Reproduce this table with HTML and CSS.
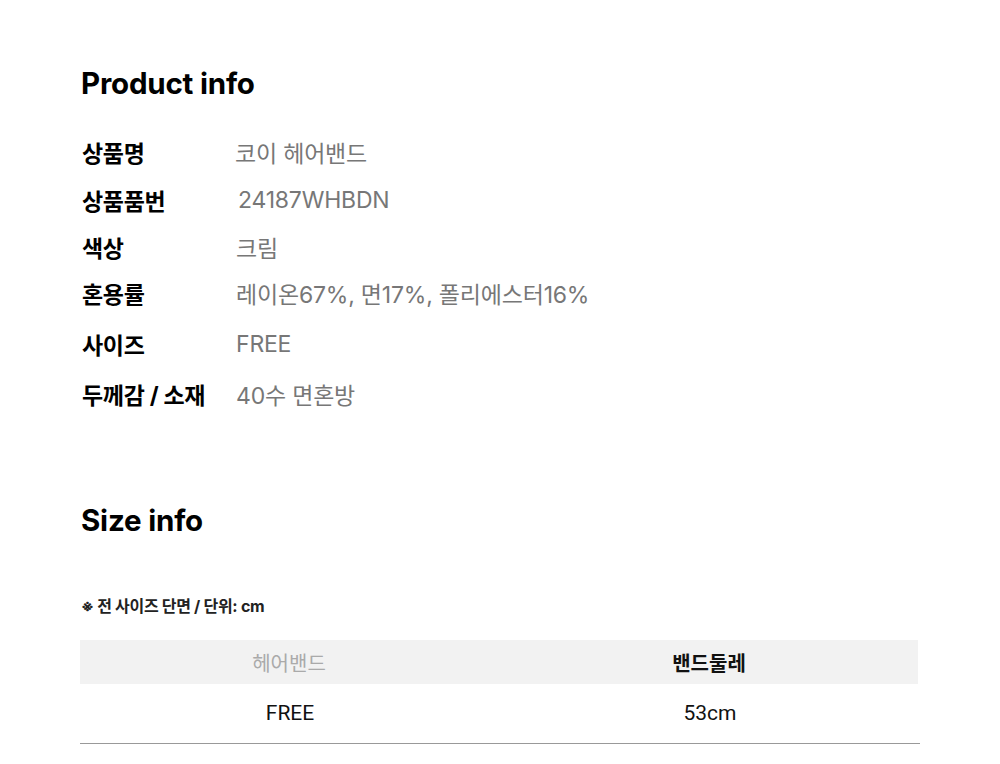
FILE: index.html
```html
<!DOCTYPE html>
<html lang="ko">
<head>
<meta charset="utf-8">
<link rel="stylesheet" href="styles.css">
</head>
<body>
<main class="page">
  <section class="product">
    <h2 class="title">Product info</h2>
    <dl class="info">
      <div class="row r1"><dt>상품명</dt><dd>코이 헤어밴드</dd></div>
      <div class="row r2"><dt>상품품번</dt><dd>24187WHBDN</dd></div>
      <div class="row r3"><dt>색상</dt><dd>크림</dd></div>
      <div class="row r4"><dt>혼용률</dt><dd>레이온67%, 면17%, 폴리에스터16%</dd></div>
      <div class="row r5"><dt>사이즈</dt><dd>FREE</dd></div>
      <div class="row r6"><dt>두께감 / 소재</dt><dd>40수 면혼방</dd></div>
    </dl>
  </section>
  <section class="size">
    <h2 class="title">Size info</h2>
    <p class="note">※ 전 사이즈 단면 / 단위: cm</p>
    <table class="size-table">
      <thead>
        <tr><th class="muted">헤어밴드</th><th>밴드둘레</th></tr>
      </thead>
      <tbody>
        <tr><td>FREE</td><td>53cm</td></tr>
      </tbody>
    </table>
  </section>
</main>
</body>
</html>
```

FILE: styles.css
```css
* { box-sizing: border-box; }
html, body { margin: 0; padding: 0; background: #fff; }
body {
  font-family: Inter, "Noto Sans CJK KR", sans-serif;
  color: #000;
}
.page {
  width: 1000px;
  padding: 65px 80px 0 80px;
}
.title {
  margin: 0;
  font-size: 29.5px;
  font-weight: 700;
  line-height: 36px;
  letter-spacing: -0.2px;
  padding-left: 1px;
}
.info {
  margin: 27px 0 0 0;
  padding: 0;
}
.row {
  display: flex;
  align-items: center;
  height: 48px;
}
.row.r3 { height: 46px; }
.row.r4 { height: 46px; }
.row.r5 { height: 56px; }
.row.r6 { height: 44px; }
.row dt {
  width: 155px;
  padding-left: 2px;
  font-size: 23px;
  font-weight: 700;
  color: #000;
  letter-spacing: -0.3px;
}
.row dd {
  margin: 0;
  padding-left: 1px;
  font-size: 23px;
  color: #777;
  letter-spacing: -0.2px;
}
.row.r1 dd { padding-left: 0; }
.row.r2 dd { padding-left: 3px; }
.size { margin-top: 86px; }
.note {
  margin: 58px 0 0 1px;
  font-size: 16px;
  font-weight: 700;
  color: #222;
  letter-spacing: -0.3px;
  line-height: 20px;
}
.size-table {
  margin-top: 24px;
  width: 840px;
  border-collapse: collapse;
  font-family: Roboto, "Noto Sans CJK KR", sans-serif;
  font-size: 20px;
  border-bottom: 1px solid #999;
}
.size-table th, .size-table td {
  width: 50%;
  text-align: center;
  padding: 0;
}
.size-table thead tr {
  height: 44px;
}
.size-table th {
  background: #f2f2f2;
  font-weight: 700;
  color: #111;
  padding-right: 2px;
}
.size-table th:last-child {
  background: linear-gradient(to right, #f2f2f2 calc(100% - 2px), #fff calc(100% - 2px));
}
.size-table th.muted {
  font-weight: 400;
  color: #aaa;
}
.size-table tbody tr { height: 59px; }
.size-table td { color: #111; font-size: 21px; }
```
